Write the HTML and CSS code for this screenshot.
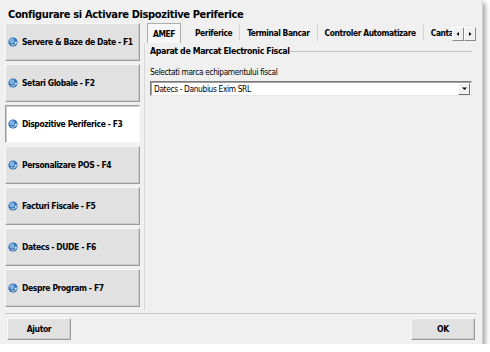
FILE: index.html
```html
<!DOCTYPE html>
<html lang="ro">
<head>
  <meta charset="UTF-8">
  <title>Configurare si Activare Dispozitive Periferice</title>
  <link rel="stylesheet" href="styles.css">
</head>
<body>
  <div class="window">
    <h1 class="title">Configurare si Activare Dispozitive Periferice</h1>

    <div class="main">
      <div class="sidebar">
        <button class="navBtn"><svg class="globe" viewBox="0 0 10 10"><circle cx="5" cy="5" r="4.6" fill="#2f6fb3"/><circle cx="4" cy="3.8" r="2.6" fill="#7fb2e0"/><path d="M2.2 6.6 C3.4 8.2 6.4 8.2 7.6 6 L6.4 5.6 L8.4 4.2 L8.8 6.6 L8 6.4 C6.6 9 3 9 2.2 6.6 Z" fill="#fff"/></svg>Servere &amp; Baze de Date - F1</button>
        <button class="navBtn"><svg class="globe" viewBox="0 0 10 10"><circle cx="5" cy="5" r="4.6" fill="#2f6fb3"/><circle cx="4" cy="3.8" r="2.6" fill="#7fb2e0"/><path d="M2.2 6.6 C3.4 8.2 6.4 8.2 7.6 6 L6.4 5.6 L8.4 4.2 L8.8 6.6 L8 6.4 C6.6 9 3 9 2.2 6.6 Z" fill="#fff"/></svg>Setari Globale - F2</button>
        <button class="navBtn active"><svg class="globe" viewBox="0 0 10 10"><circle cx="5" cy="5" r="4.6" fill="#2f6fb3"/><circle cx="4" cy="3.8" r="2.6" fill="#7fb2e0"/><path d="M2.2 6.6 C3.4 8.2 6.4 8.2 7.6 6 L6.4 5.6 L8.4 4.2 L8.8 6.6 L8 6.4 C6.6 9 3 9 2.2 6.6 Z" fill="#fff"/></svg>Dispozitive Periferice - F3</button>
        <button class="navBtn"><svg class="globe" viewBox="0 0 10 10"><circle cx="5" cy="5" r="4.6" fill="#2f6fb3"/><circle cx="4" cy="3.8" r="2.6" fill="#7fb2e0"/><path d="M2.2 6.6 C3.4 8.2 6.4 8.2 7.6 6 L6.4 5.6 L8.4 4.2 L8.8 6.6 L8 6.4 C6.6 9 3 9 2.2 6.6 Z" fill="#fff"/></svg>Personalizare POS - F4</button>
        <button class="navBtn"><svg class="globe" viewBox="0 0 10 10"><circle cx="5" cy="5" r="4.6" fill="#2f6fb3"/><circle cx="4" cy="3.8" r="2.6" fill="#7fb2e0"/><path d="M2.2 6.6 C3.4 8.2 6.4 8.2 7.6 6 L6.4 5.6 L8.4 4.2 L8.8 6.6 L8 6.4 C6.6 9 3 9 2.2 6.6 Z" fill="#fff"/></svg>Facturi Fiscale - F5</button>
        <button class="navBtn"><svg class="globe" viewBox="0 0 10 10"><circle cx="5" cy="5" r="4.6" fill="#2f6fb3"/><circle cx="4" cy="3.8" r="2.6" fill="#7fb2e0"/><path d="M2.2 6.6 C3.4 8.2 6.4 8.2 7.6 6 L6.4 5.6 L8.4 4.2 L8.8 6.6 L8 6.4 C6.6 9 3 9 2.2 6.6 Z" fill="#fff"/></svg>Datecs - DUDE - F6</button>
        <button class="navBtn"><svg class="globe" viewBox="0 0 10 10"><circle cx="5" cy="5" r="4.6" fill="#2f6fb3"/><circle cx="4" cy="3.8" r="2.6" fill="#7fb2e0"/><path d="M2.2 6.6 C3.4 8.2 6.4 8.2 7.6 6 L6.4 5.6 L8.4 4.2 L8.8 6.6 L8 6.4 C6.6 9 3 9 2.2 6.6 Z" fill="#fff"/></svg>Despre Program - F7</button>
      </div>

      <div class="tabControl">
        <div class="tabStrip">
          <span class="tab selected">AMEF</span>
          <span class="tab">Periferice</span>
          <span class="tab">Terminal Bancar</span>
          <span class="tab">Controler Automatizare</span>
          <span class="tab last">Canta</span>
          <div class="scroller">
            <span class="arrow"><svg viewBox="0 0 6 6"><path d="M4 1 L1.5 3 L4 5 Z" fill="#000"/></svg></span>
            <span class="arrow"><svg viewBox="0 0 6 6"><path d="M2 1 L4.5 3 L2 5 Z" fill="#000"/></svg></span>
          </div>
        </div>

        <div class="tabPage">
          <div class="groupTitle"><span>Aparat de Marcat Electronic Fiscal</span></div>
          <p class="fieldLabel">Selectati marca echipamentului fiscal</p>
          <div class="combo">
            <span class="comboText">Datecs - Danubius Exim SRL</span>
            <span class="comboBtn"><svg viewBox="0 0 7 5"><path d="M1 1.5 H6 L3.5 4 Z" fill="#000"/></svg></span>
          </div>
        </div>
      </div>
    </div>

    <div class="footer">
      <button class="dlgBtn">Ajutor</button>
      <button class="dlgBtn">OK</button>
    </div>
  </div>
</body>
</html>
```

FILE: styles.css
```css
*{
  box-sizing: border-box;
}

body{
  margin: 0;
  background: #fff;
  font-family: "DejaVu Sans Condensed", "DejaVu Sans", sans-serif;
  color: #000;
}

.window{
  width: 482px;
  height: 344px;
  background: #f0f0f0;
  box-shadow: 1px 1px 0 #d4d4d4, 3px 3px 5px rgba(0,0,0,0.4);
  display: flex;
  flex-direction: column;
}

.title{
  margin: 0;
  padding: 8px 0 0 8px;
  height: 23px;
  font-size: 11px;
  letter-spacing: -0.35px;
  font-weight: bold;
  line-height: 14px;
}

.main{
  display: flex;
  height: 287px;
}

.sidebar{
  flex: none;
  display: flex;
  flex-direction: column;
  gap: 3px;
  margin-left: 5px;
  width: 135px;
}

.navBtn{
  width: 135px;
  height: 38px;
  display: flex;
  align-items: center;
  gap: 4px;
  padding: 0 0 0 2px;
  background: #e1e1e1;
  border: 1px solid;
  border-color: #f8f8f8 #9c9c9c #9c9c9c #f8f8f8;
  box-shadow: inset -1px -1px 0 #cdcdcd;
  font-family: inherit;
  font-size: 8.5px;
  letter-spacing: -0.4px;
  font-weight: bold;
  color: #000;
  text-align: left;
  white-space: nowrap;
}
.navBtn.active{
  background: #fff;
  border-color: #9c9c9c #f8f8f8 #f8f8f8 #9c9c9c;
  box-shadow: inset 1px 1px 0 #cdcdcd;
}

.globe{
  width: 10px;
  height: 10px;
  flex: none;
}

.tabControl{
  flex: 1;
  min-width: 0;
  margin-left: 4px;
  margin-right: 5px;
  display: flex;
  flex-direction: column;
}

.tabStrip{
  display: flex;
  align-items: stretch;
  height: 20px;
  padding-left: 3px;
  position: relative;
  overflow: hidden;
}

.tab{
  display: flex;
  align-items: center;
  padding: 0 7px;
  font-size: 8.4px;
  letter-spacing: -0.4px;
  font-weight: bold;
  white-space: nowrap;
  border-right: 1px solid #d2d2d2;
  margin: 1px 0 2px;
}
.tab.selected{
  border: 1px solid #adadad;
  border-bottom: none;
  background: #f7f7f7;
  padding: 0 5px;
  margin: 0 7px 0 0;
  width: 34px;
}
.tab.last{
  border-right: none;
  padding-right: 0;
}

.scroller{
  position: absolute;
  right: 1px;
  top: 4px;
  display: flex;
  background: #f0f0f0;
}
.arrow{
  width: 12px;
  height: 14px;
  display: flex;
  align-items: center;
  justify-content: center;
  background: #f0f0f0;
  border: 1px solid;
  border-color: #fff #8a8a8a #8a8a8a #fff;
}
.arrow svg{
  width: 6px;
  height: 6px;
}

.tabPage{
  flex: 1;
  border-left: 1px solid #d8d8d8;
  padding: 2px 5px 0 5px;
}

.groupTitle{
  display: flex;
  align-items: center;
  font-size: 8.8px;
  letter-spacing: -0.4px;
  font-weight: bold;
  height: 12px;
}
.groupTitle::after{
  content: "";
  flex: 1;
  border-top: 1px solid #c4c4c4;
  margin-left: 1px;
}

.fieldLabel{
  margin: 10px 0 0;
  font-size: 8.3px;
  letter-spacing: -0.35px;
  line-height: 11px;
}

.combo{
  margin-top: 3px;
  height: 15px;
  display: flex;
  align-items: center;
  background: #fff;
  border: 1px solid;
  border-color: #7a7a7a #e8e8e8 #e8e8e8 #7a7a7a;
  box-shadow: inset 1px 1px 0 #a0a0a0;
}
.comboText{
  flex: 1;
  padding-left: 3px;
  font-size: 8.3px;
  letter-spacing: -0.35px;
}
.comboBtn{
  width: 12px;
  height: 12px;
  margin-right: 1px;
  display: flex;
  align-items: center;
  justify-content: center;
  background: #f0f0f0;
  border: 1px solid;
  border-color: #fff #6e6e6e #6e6e6e #fff;
}
.comboBtn svg{
  width: 7px;
  height: 5px;
}

.footer{
  margin: 3px 5px 0 5px;
  border-top: 1px solid #c8c8c8;
  display: flex;
  justify-content: space-between;
  padding: 4px 2px 0 2px;
}

.dlgBtn{
  width: 64px;
  height: 22px;
  background: #e1e1e1;
  border: 1px solid;
  border-color: #f8f8f8 #9c9c9c #9c9c9c #f8f8f8;
  box-shadow: inset -1px -1px 0 #cdcdcd;
  font-family: inherit;
  font-size: 8.6px;
  letter-spacing: -0.4px;
  font-weight: bold;
  color: #000;
}
```
